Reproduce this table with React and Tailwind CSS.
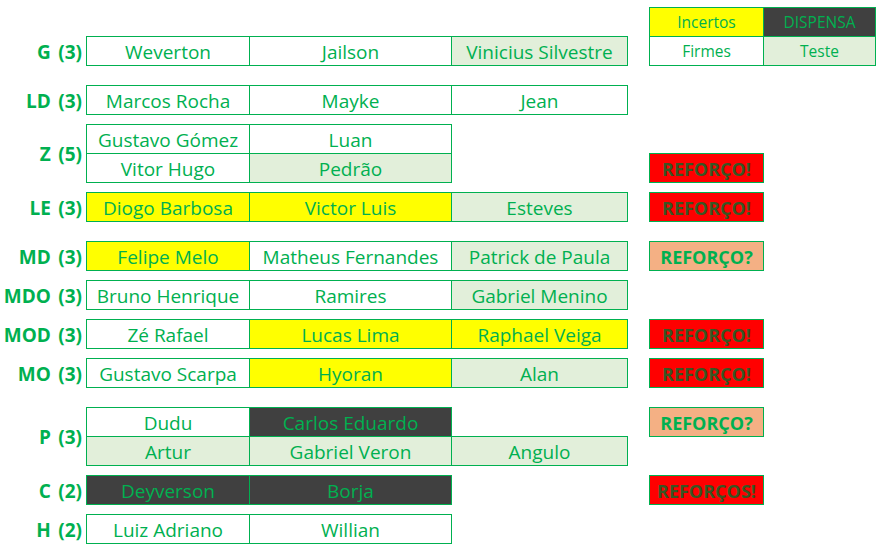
const FILLS = {
  w: 'bg-white',
  g: 'bg-[#e2efda]',
  y: 'bg-[#ffff00]',
  d: 'bg-[#404040]',
}

const COLS = ['w-[164px]', 'w-[203px] -ml-px', 'w-[177px] -ml-px']

function Cell({ col, cell }) {
  if (!cell) return <div className={`${COLS[col]} shrink-0`} />
  const [name, fill] = cell
  return (
    <div
      className={`${COLS[col]} ${FILLS[fill]} shrink-0 h-full border border-[#00b050] flex items-center justify-center pt-[2px] leading-none whitespace-nowrap text-[19px] text-[#00b050]`}
    >
      {name}
    </div>
  )
}

function Side({ side }) {
  if (!side) return null
  if (side.legend) {
    const [a, b] = side.legend
    return (
      <div className="ml-[21px] flex h-full">
        <div className={`w-[115px] ${FILLS[a[1]]} border border-[#00b050] flex items-center justify-center pt-px leading-none text-[15.5px] text-[#00b050]`}>
          {a[0]}
        </div>
        <div className={`w-[113px] -ml-px ${FILLS[b[1]]} border border-[#00b050] flex items-center justify-center pt-px leading-none text-[15.5px] text-[#00b050]`}>
          {b[0]}
        </div>
      </div>
    )
  }
  if (side.ask) {
    return (
      <div className="ml-[21px] w-[115px] h-full bg-[#f4b084] border border-[#00b050] flex items-center justify-center pt-px leading-none font-bold text-[18px] text-[#00b050] whitespace-nowrap">
        {side.text}
      </div>
    )
  }
  return (
    <div className="ml-[21px] w-[115px] h-full bg-[#ff0000] border border-[#00b050] flex items-center justify-center pt-px leading-none font-bold text-[18px] text-[#375623] whitespace-nowrap">
      {side.text}
    </div>
  )
}

function Row({ cells = [], side, joined }) {
  return (
    <div className={`flex h-[30px] ${joined ? '-mt-px' : ''}`}>
      <Cell col={0} cell={cells[0]} />
      <Cell col={1} cell={cells[1]} />
      <Cell col={2} cell={cells[2]} />
      <Side side={side} />
    </div>
  )
}

function Group({ label, rows, className = '' }) {
  return (
    <div className={`flex ${className}`}>
      <div className="w-[86px] shrink-0 flex items-center justify-end pr-[4px] pt-[2px] leading-none font-bold text-[19px] [word-spacing:2.5px] text-[#00b050] whitespace-nowrap">
        {label}
      </div>
      <div className="flex flex-col">
        {rows.map((r, i) => (
          <Row key={i} cells={r.cells} side={r.side} joined={i > 0} />
        ))}
      </div>
    </div>
  )
}

const BANG = { text: 'REFORÇO!' }
const ASK = { text: 'REFORÇO?', ask: true }

export default function App() {
  return (
    <div className="w-[882px] h-[547px] bg-white overflow-hidden pt-[7px] font-['Open_Sans',sans-serif]">
      <Group label="" rows={[{ side: { legend: [['Incertos', 'y'], ['DISPENSA', 'd']] } }]} />
      <Group
        className="-mt-px"
        label="G (3)"
        rows={[{ cells: [['Weverton', 'w'], ['Jailson', 'w'], ['Vinicius Silvestre', 'g']], side: { legend: [['Firmes', 'w'], ['Teste', 'g']] } }]}
      />
      <Group className="mt-[19px]" label="LD (3)" rows={[{ cells: [['Marcos Rocha', 'w'], ['Mayke', 'w'], ['Jean', 'w']] }]} />
      <Group
        className="mt-[9px]"
        label="Z (5)"
        rows={[
          { cells: [['Gustavo Gómez', 'w'], ['Luan', 'w']] },
          { cells: [['Vitor Hugo', 'w'], ['Pedrão', 'g']], side: BANG },
        ]}
      />
      <Group className="mt-[9px]" label="LE (3)" rows={[{ cells: [['Diogo Barbosa', 'y'], ['Victor Luis', 'y'], ['Esteves', 'g']], side: BANG }]} />
      <Group className="mt-[19px]" label="MD (3)" rows={[{ cells: [['Felipe Melo', 'y'], ['Matheus Fernandes', 'w'], ['Patrick de Paula', 'g']], side: ASK }]} />
      <Group className="mt-[9px]" label="MDO (3)" rows={[{ cells: [['Bruno Henrique', 'w'], ['Ramires', 'w'], ['Gabriel Menino', 'g']] }]} />
      <Group className="mt-[9px]" label="MOD (3)" rows={[{ cells: [['Zé Rafael', 'w'], ['Lucas Lima', 'y'], ['Raphael Veiga', 'y']], side: BANG }]} />
      <Group className="mt-[9px]" label="MO (3)" rows={[{ cells: [['Gustavo Scarpa', 'w'], ['Hyoran', 'y'], ['Alan', 'g']], side: BANG }]} />
      <Group
        className="mt-[19px]"
        label="P (3)"
        rows={[
          { cells: [['Dudu', 'w'], ['Carlos Eduardo', 'd']], side: ASK },
          { cells: [['Artur', 'g'], ['Gabriel Veron', 'g'], ['Angulo', 'g']] },
        ]}
      />
      <Group className="mt-[9px]" label="C (2)" rows={[{ cells: [['Deyverson', 'd'], ['Borja', 'd']], side: { text: 'REFORÇOS!' } }]} />
      <Group className="mt-[9px]" label="H (2)" rows={[{ cells: [['Luiz Adriano', 'w'], ['Willian', 'w']] }]} />
    </div>
  )
}
